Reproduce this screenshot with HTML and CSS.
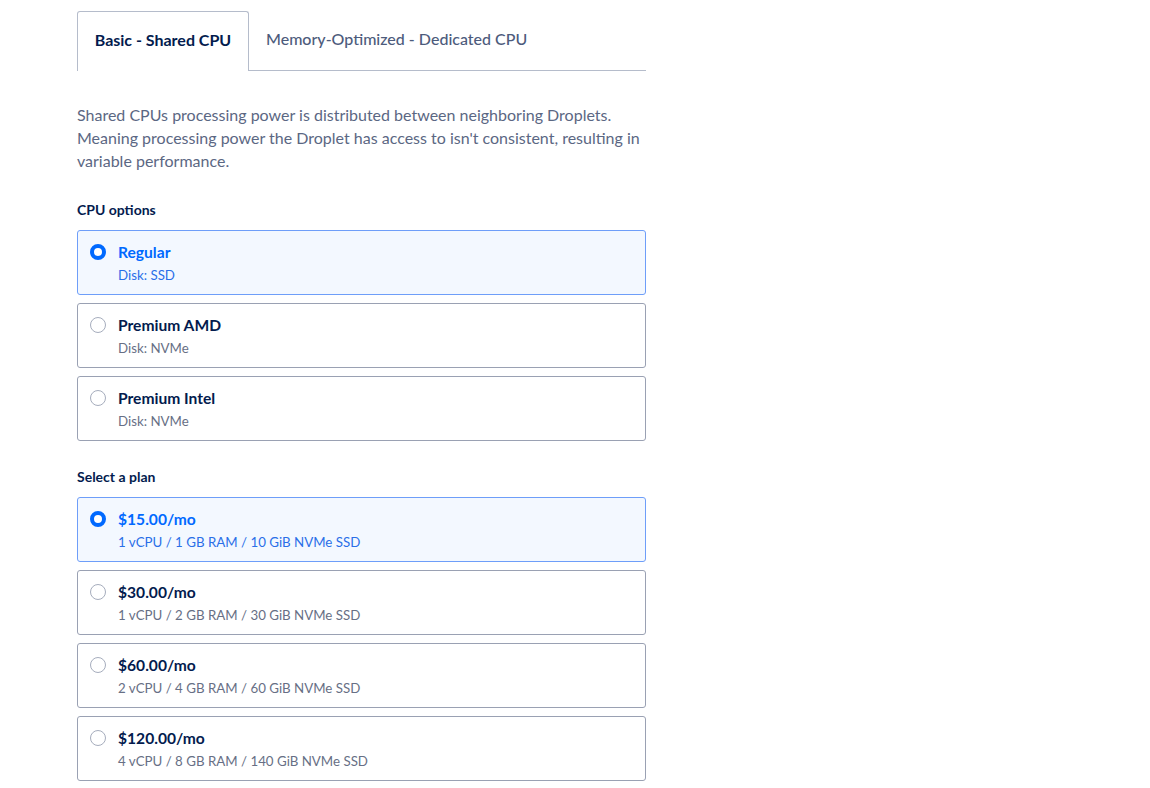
FILE: index.html
```html
<!DOCTYPE html>
<html>
<head>
<meta charset="utf-8">
<link rel="stylesheet" href="styles.css">
</head>
<body>
<div class="page">
  <div class="tabs">
    <div class="tab active">Basic - Shared CPU</div>
    <div class="tab">Memory-Optimized - Dedicated CPU</div>
    <div class="tab-fill"></div>
  </div>
  <p class="desc">Shared CPUs processing power is distributed between neighboring Droplets. Meaning processing power the Droplet has access to isn't consistent, resulting in variable performance.</p>

  <div class="label">CPU options</div>
  <div class="options">
    <div class="card selected"><span class="radio"></span><div class="text"><div class="title">Regular</div><div class="sub">Disk: SSD</div></div></div>
    <div class="card"><span class="radio"></span><div class="text"><div class="title">Premium AMD</div><div class="sub">Disk: NVMe</div></div></div>
    <div class="card"><span class="radio"></span><div class="text"><div class="title">Premium Intel</div><div class="sub">Disk: NVMe</div></div></div>
  </div>

  <div class="label plan-label">Select a plan</div>
  <div class="options">
    <div class="card selected"><span class="radio"></span><div class="text"><div class="title">$15.00/mo</div><div class="sub">1 vCPU / 1 GB RAM / 10 GiB NVMe SSD</div></div></div>
    <div class="card"><span class="radio"></span><div class="text"><div class="title">$30.00/mo</div><div class="sub">1 vCPU / 2 GB RAM / 30 GiB NVMe SSD</div></div></div>
    <div class="card"><span class="radio"></span><div class="text"><div class="title">$60.00/mo</div><div class="sub">2 vCPU / 4 GB RAM / 60 GiB NVMe SSD</div></div></div>
    <div class="card"><span class="radio"></span><div class="text"><div class="title">$120.00/mo</div><div class="sub">4 vCPU / 8 GB RAM / 140 GiB NVMe SSD</div></div></div>
  </div>
</div>
</body>
</html>
```

FILE: styles.css
```css
* { box-sizing: border-box; }
html, body { margin: 0; padding: 0; background: #fff; }
body { font-family: "Lato", "Open Sans", sans-serif; color: #031b4e; }
.page { width: 569px; margin-left: 77px; padding-top: 11px; }

.tabs { display: flex; height: 60px; }
.tab {
  display: flex; align-items: center; padding: 0 17px 4px 17px;
  font-size: 16px; font-weight: 500; color: #4d5b7c; white-space: nowrap;
  border-bottom: 1px solid #b5bccb;
}
.tab.active {
  width: 172px; padding: 0 0 4px 0; justify-content: center;
  border: 1px solid #b5bccb; border-bottom: none; border-radius: 3px 3px 0 0;
  color: #031b4e; font-weight: 700;
}
.tab-fill { flex: 1; border-bottom: 1px solid #b5bccb; }

.desc {
  margin: 32px 0 0 0; font-size: 16px; line-height: 23px; color: #5b6783;
}
.label { font-size: 14px; font-weight: 700; margin-top: 29px; line-height: 18px; }
.plan-label { margin-top: 27px; }
.options { display: flex; flex-direction: column; gap: 8px; margin-top: 11px; }
.card {
  display: flex; align-items: flex-start; height: 65px;
  border: 1px solid #9aa1b3; border-radius: 3px; padding: 11px 12px 0 12px;
}
.card.selected { border-color: #6e9ef9; background: #f3f8ff; }
.radio {
  width: 16px; height: 16px; border-radius: 50%; border: 1px solid #a6adbd;
  margin: 2px 12px 0 0; flex: none; background: #fff;
}
.selected .radio { border: 4px solid #0069ff; }
.title { font-size: 15.6px; font-weight: 700; line-height: 20px; }
.sub { font-size: 13.3px; line-height: 16px; margin-top: 5px; color: #676f85; }
.selected .title { color: #0069ff; }
.selected .sub { color: #2a6fe8; }
```
